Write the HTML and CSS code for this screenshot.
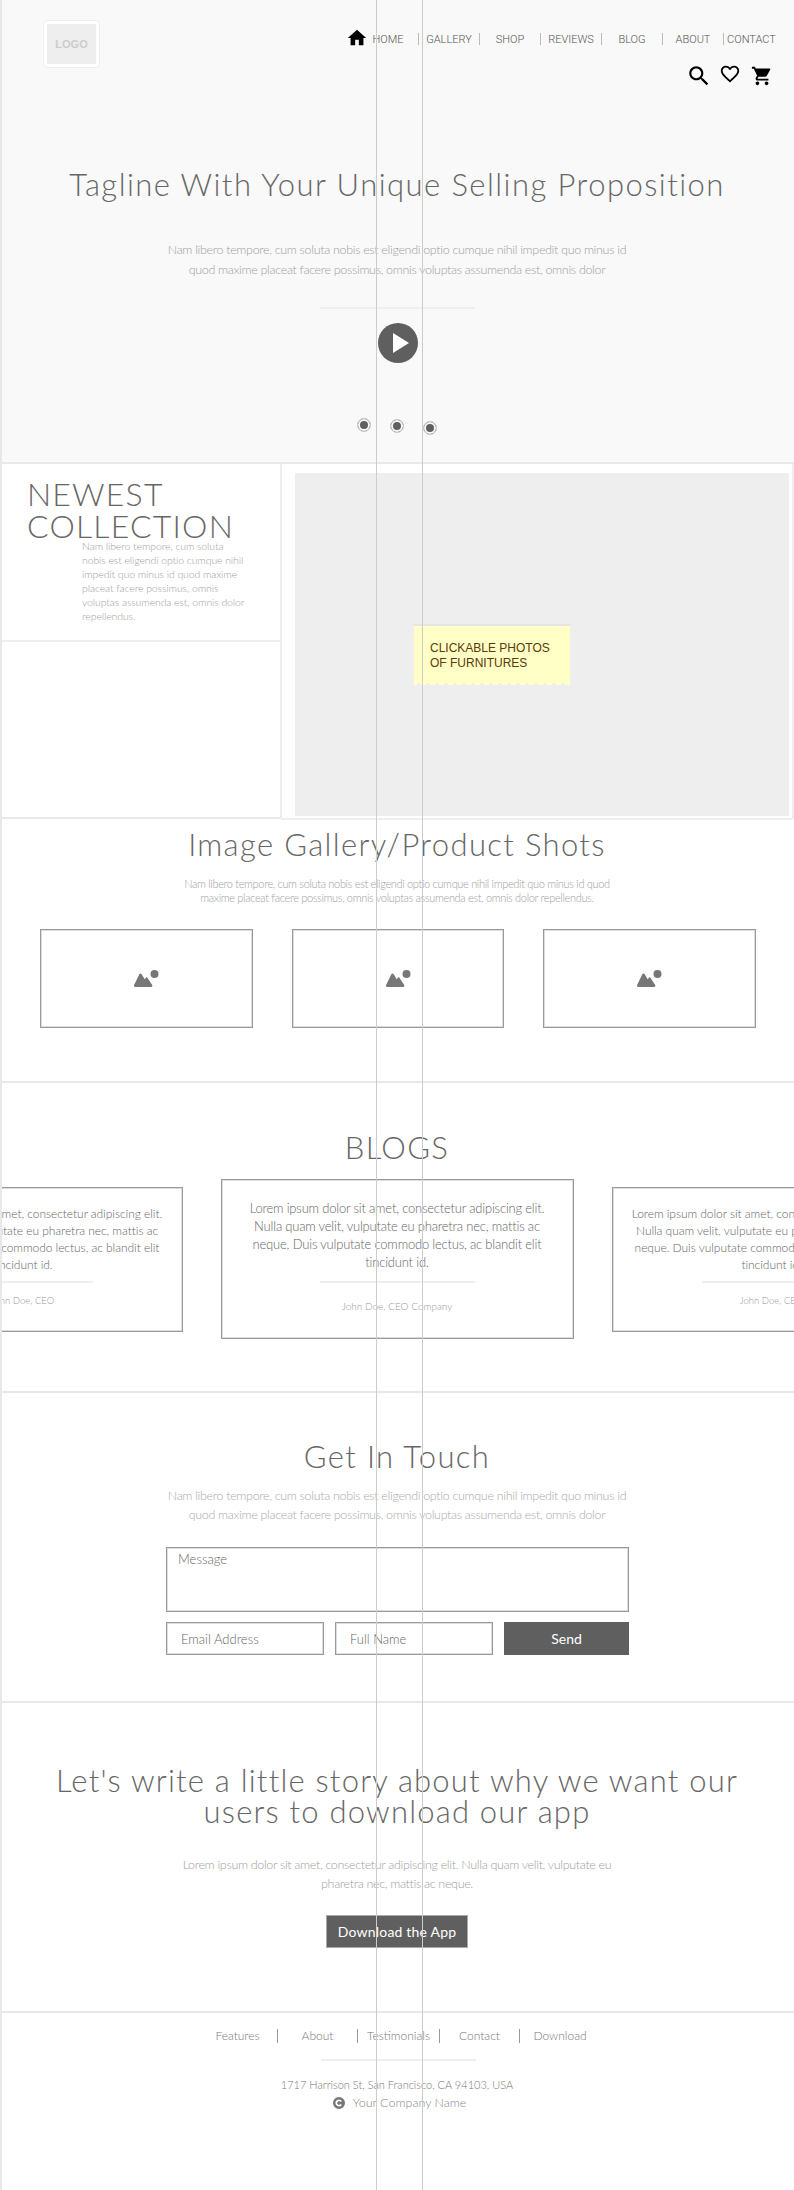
FILE: index.html
```html
<!DOCTYPE html>
<html lang="en">
<head>
    <meta charset="UTF-8">
    <title>Furniture Store Wireframe</title>
    <link rel="stylesheet" href="styles.css">
</head>
<body>
<div class="page">
    <div class="guide guide-edge"></div>
    <div class="guide guide-one"></div>
    <div class="guide guide-two"></div>

    <section class="hero">
        <header class="header">
            <div class="logo">LOGO</div>
            <div class="header-right">
                <nav class="nav">
                    <svg class="home-icon" viewBox="0 0 24 24"><path d="M10 20v-6h4v6h5v-8h3L12 3 2 12h3v8z"/></svg>
                    <a href="#">HOME</a>
                    <a href="#">GALLERY</a>
                    <a href="#">SHOP</a>
                    <a href="#">REVIEWS</a>
                    <a href="#">BLOG</a>
                    <a href="#">ABOUT</a>
                    <a href="#">CONTACT</a>
                </nav>
                <div class="tools">
                    <svg class="tool-search" viewBox="0 0 24 24"><path d="M15.5 14h-.79l-.28-.27C15.41 12.59 16 11.11 16 9.5 16 5.91 13.09 3 9.5 3S3 5.91 3 9.5 5.91 16 9.5 16c1.61 0 3.09-.59 4.23-1.57l.27.28v.79l5 4.99L20.49 19l-4.99-5zm-6 0C7.01 14 5 11.99 5 9.5S7.01 5 9.5 5 14 7.01 14 9.5 11.99 14 9.5 14z"/></svg>
                    <svg class="tool-heart" viewBox="0 0 24 24"><path d="M16.5 3c-1.74 0-3.41.81-4.5 2.09C10.91 3.81 9.24 3 7.5 3 4.42 3 2 5.42 2 8.5c0 3.78 3.4 6.86 8.55 11.54L12 21.35l1.45-1.32C18.6 15.36 22 12.28 22 8.5 22 5.42 19.58 3 16.5 3zm-4.4 15.55l-.1.1-.1-.1C7.14 14.24 4 11.39 4 8.5 4 6.5 5.5 5 7.5 5c1.54 0 3.04.99 3.57 2.36h1.87C13.46 5.99 14.96 5 16.5 5c2 0 3.5 1.5 3.5 3.5 0 2.89-3.14 5.74-7.9 10.05z"/></svg>
                    <svg class="tool-cart" viewBox="0 0 24 24"><path d="M7 18c-1.1 0-1.99.9-1.99 2S5.9 22 7 22s2-.9 2-2-.9-2-2-2zM1 2v2h2l3.6 7.59-1.35 2.45c-.16.28-.25.61-.25.96 0 1.1.9 2 2 2h12v-2H7.42c-.14 0-.25-.11-.25-.25l.03-.12.9-1.83h7.45c.75 0 1.41-.41 1.75-1.03l3.58-6.49c.08-.14.12-.31.12-.48 0-.55-.45-1-1-1H5.21l-.94-2H1zm16 16c-1.1 0-1.99.9-1.99 2s.89 2 1.99 2 2-.9 2-2-.9-2-2-2z"/></svg>
                </div>
            </div>
        </header>
        <h1 class="hero-title">Tagline With Your Unique Selling Proposition</h1>
        <p class="hero-text">Nam libero tempore, cum soluta nobis est eligendi optio cumque nihil impedit quo minus id<br>quod maxime placeat facere possimus, omnis voluptas assumenda est, omnis dolor</p>
        <div class="rule hero-rule"></div>
        <div class="play"><svg viewBox="0 0 40 40"><path d="M15 10l16 10-16 10z"/></svg></div>
        <div class="dots">
            <span class="dot"></span>
            <span class="dot dot-two"></span>
            <span class="dot dot-three"></span>
        </div>
    </section>

    <section class="newest">
        <div class="newest-card">
            <h2 class="newest-title">NEWEST<br>COLLECTION</h2>
            <p class="newest-text">Nam libero tempore, cum soluta<br>nobis est eligendi optio cumque nihil<br>impedit quo minus id quod maxime<br>placeat facere possimus, omnis<br>voluptas assumenda est, omnis dolor<br>repellendus.</p>
        </div>
        <div class="photo-card">
            <div class="photo">
                <div class="note">CLICKABLE PHOTOS<br>OF FURNITURES</div>
            </div>
        </div>
    </section>

    <section class="gallery">
        <h2 class="title">Image Gallery/Product Shots</h2>
        <p class="gallery-text">Nam libero tempore, cum soluta nobis est eligendi optio cumque nihil impedit quo minus id quod<br>maxime placeat facere possimus, omnis voluptas assumenda est, omnis dolor repellendus.</p>
        <div class="shots">
            <div class="shot"><svg viewBox="0 0 26 18"><path d="M7.500 3.500c.5 0 .9.3 1.200.7l3 5 1.200-1.500c.4-.5 1.100-.5 1.500 0l4.800 7.300c.5.9 0 2-1 2H2.200c-1 0-1.600-1.100-1.100-2l5.200-10.800c.2-.4.7-.7 1.200-.7z"/><circle cx="21.500" cy="4" r="4"/></svg></div>
            <div class="shot"><svg viewBox="0 0 26 18"><path d="M7.500 3.500c.5 0 .9.3 1.200.7l3 5 1.200-1.500c.4-.5 1.100-.5 1.500 0l4.800 7.300c.5.9 0 2-1 2H2.200c-1 0-1.600-1.100-1.100-2l5.200-10.800c.2-.4.7-.7 1.200-.7z"/><circle cx="21.500" cy="4" r="4"/></svg></div>
            <div class="shot"><svg viewBox="0 0 26 18"><path d="M7.500 3.500c.5 0 .9.3 1.200.7l3 5 1.200-1.500c.4-.5 1.100-.5 1.500 0l4.800 7.300c.5.9 0 2-1 2H2.200c-1 0-1.600-1.100-1.100-2l5.200-10.800c.2-.4.7-.7 1.200-.7z"/><circle cx="21.500" cy="4" r="4"/></svg></div>
        </div>
    </section>

    <section class="blogs">
        <h2 class="title">BLOGS</h2>
        <div class="blog-row">
            <div class="blog blog-side">
                <p>Lorem ipsum dolor sit amet, consectetur adipiscing elit.<br>Nulla quam velit, vulputate eu pharetra nec, mattis ac<br>neque. Duis vulputate commodo lectus, ac blandit elit<br>tincidunt id.</p>
                <div class="rule"></div>
                <span>John Doe, CEO</span>
            </div>
            <div class="blog blog-main">
                <p>Lorem ipsum dolor sit amet, consectetur adipiscing elit.<br>Nulla quam velit, vulputate eu pharetra nec, mattis ac<br>neque. Duis vulputate commodo lectus, ac blandit elit<br>tincidunt id.</p>
                <div class="rule"></div>
                <span>John Doe, CEO Company</span>
            </div>
            <div class="blog blog-side">
                <p>Lorem ipsum dolor sit amet, consectetur adipiscing elit.<br>Nulla quam velit, vulputate eu pharetra nec, mattis ac<br>neque. Duis vulputate commodo lectus, ac blandit elit<br>tincidunt id.</p>
                <div class="rule"></div>
                <span>John Doe, CEO</span>
            </div>
        </div>
    </section>

    <section class="contact">
        <h2 class="title">Get In Touch</h2>
        <p class="lead">Nam libero tempore, cum soluta nobis est eligendi optio cumque nihil impedit quo minus id<br>quod maxime placeat facere possimus, omnis voluptas assumenda est, omnis dolor</p>
        <form class="contact-form">
            <textarea placeholder="Message"></textarea>
            <div class="form-row">
                <input type="text" placeholder="Email Address">
                <input type="text" placeholder="Full Name">
                <button type="button" class="btn btn-send">Send</button>
            </div>
        </form>
    </section>

    <section class="app">
        <h2 class="title app-title">Let's write a little story about why we want our<br>users to download our app</h2>
        <p class="lead app-text">Lorem ipsum dolor sit amet, consectetur adipiscing elit. Nulla quam velit, vulputate eu<br>pharetra nec, mattis ac neque.</p>
        <button type="button" class="btn btn-app">Download the App</button>
    </section>

    <footer class="footer">
        <nav class="footer-nav">
            <a href="#">Features</a>
            <a href="#">About</a>
            <a href="#">Testimonials</a>
            <a href="#">Contact</a>
            <a href="#">Download</a>
        </nav>
        <div class="rule footer-rule"></div>
        <p class="address">1717 Harrison St, San Francisco, CA 94103, USA</p>
        <p class="company">
            <svg viewBox="0 0 24 24"><path d="M12 0a12 12 0 1 0 0 24 12 12 0 0 0 0-24zm0 19a7 7 0 1 1 5.800-10.900l-3 1.800A3.500 3.500 0 1 0 14.800 14l3 1.900A7 7 0 0 1 12 19z"/></svg>
            Your Company Name
        </p>
    </footer>
</div>
</body>
</html>
```

FILE: styles.css
```css
* {
    box-sizing: border-box;
}
body {
    margin: 0;
    font-family: Lato, sans-serif;
    font-weight: 300;
    color: #666;
    background-color: #fff;
}
p, h1, h2 {
    margin: 0;
    font-weight: 300;
}
a {
    color: inherit;
    text-decoration: none;
}
.page {
    position: relative;
    width: 794px;
    height: 2190px;
    overflow: hidden;
}
.guide {
    position: absolute;
    top: 0;
    bottom: 0;
    width: 1px;
    background-color: #ccc;
    z-index: 5;
}
.guide-edge {
    left: 0;
    width: 2px;
    background-color: #e8e8e8;
}
.guide-one {
    left: 376px;
}
.guide-two {
    left: 422px;
}
.rule {
    width: 155px;
    height: 2px;
    margin: 0 auto;
    background-color: #eee;
}
.title {
    font-size: 31px;
    letter-spacing: 1.35px;
    line-height: 40px;
    text-align: center;
    color: #666;
}
.lead {
    font-size: 12.5px;
    letter-spacing: -0.33px;
    line-height: 19px;
    text-align: center;
    color: #a0a0a0;
}

/* hero */
.hero {
    height: 462px;
    background-color: #f9f9f9;
    text-align: center;
}
.header {
    display: flex;
    justify-content: space-between;
    height: 89px;
    padding: 21px 15px 0 44px;
}
.logo {
    width: 55px;
    height: 46px;
    border: 3px solid #fff;
    outline: 1px solid #eee;
    border-radius: 3px;
    background-color: #eee;
    color: #ccc;
    font-family: "Liberation Sans", sans-serif;
    font-size: 11px;
    font-weight: 700;
    line-height: 40px;
    text-align: center;
}
.header-right {
    margin-top: 6px;
}
.nav {
    display: flex;
    height: 22px;
    font-family: Roboto, sans-serif;
    font-size: 11px;
    font-weight: 300;
    color: #555;
}
.home-icon {
    width: 22px;
    height: 22px;
    margin-right: -10px;
    fill: #000;
}
.nav a {
    width: 61px;
    height: 12px;
    margin-top: 6px;
    border-right: 1px solid #bbb;
    line-height: 14px;
    text-align: center;
}
.nav a:last-child {
    width: 55px;
    border-right: none;
}
.tools {
    display: flex;
    justify-content: flex-end;
    align-items: flex-start;
    margin-top: 14px;
    margin-right: 6px;
}
.tools svg {
    fill: #000;
}
.tool-search {
    width: 26px;
    height: 26px;
}
.tool-heart {
    width: 22px;
    height: 22px;
    margin-left: 7px;
}
.tool-cart {
    width: 22px;
    height: 22px;
    margin-left: 10px;
    margin-top: 2px;
}
.hero-title {
    margin-top: 75px;
    font-size: 31px;
    letter-spacing: 1.45px;
    line-height: 40px;
    color: #666;
}
.hero-text {
    margin-top: 36px;
    font-size: 12.5px;
    letter-spacing: -0.33px;
    line-height: 20px;
    color: #a0a0a0;
}
.hero-rule {
    margin-top: 27px;
}
.play {
    width: 40px;
    height: 40px;
    margin: 14px 0 0 378px;
    border-radius: 50%;
    background-color: #5f5f5f;
}
.play svg {
    display: block;
    fill: #fff;
}
.dots {
    display: flex;
    justify-content: center;
    gap: 19px;
    margin-top: 55px;
}
.dot {
    width: 14px;
    height: 14px;
    border: 1px solid #ccc;
    border-radius: 50%;
    background-color: #5f5f5f;
    box-shadow: inset 0 0 0 2px #f9f9f9;
}
.dot-two {
    margin-top: 1px;
}
.dot-three {
    margin-top: 3px;
}

/* newest collection */
.newest {
    display: flex;
    align-items: flex-start;
    height: 357px;
    border-top: 2px solid #e8e8e8;
    border-bottom: 2px solid #e8e8e8;
}
.newest-card {
    width: 282px;
    height: 178px;
    padding: 14px 0 0 27px;
    border-right: 2px solid #eee;
    border-bottom: 2px solid #eee;
}
.newest-title {
    font-size: 32px;
    letter-spacing: 1.2px;
    line-height: 32px;
    color: #666;
}
.newest-text {
    margin: -3px 0 0 55px;
    font-size: 10.5px;
    letter-spacing: -0.1px;
    line-height: 14px;
    color: #a0a0a0;
    white-space: nowrap;
}
.photo-card {
    width: 514px;
    height: 356px;
    margin-left: -2px;
    padding: 9px 3px 2px 13px;
    border: 2px solid #eee;
    border-top: none;
    border-radius: 0 0 3px 3px;
    background-color: #fff;
    position: relative;
}
.photo {
    position: relative;
    height: 100%;
    background-color: #eee;
}
.note {
    position: absolute;
    left: 119px;
    top: 151px;
    width: 156px;
    height: 61px;
    padding: 15px 16px 0;
    border-top: 2px solid #e5e5e5;
    color: #5a3a08;
    font-family: "Liberation Sans", sans-serif;
    font-size: 12px;
    font-weight: 400;
    line-height: 15px;
    background:
        linear-gradient(135deg, #ffffc6 50%, transparent 50%) 0 100% / 9px 5px repeat-x,
        linear-gradient(225deg, #ffffc6 50%, transparent 50%) 0 100% / 9px 5px repeat-x,
        linear-gradient(#ffffc6, #ffffc6) 0 0 / 100% calc(100% - 5px) no-repeat;
}

/* gallery */
.gallery {
    height: 264px;
    padding-top: 5px;
    border-bottom: 2px solid #e8e8e8;
}
.gallery-text {
    margin-top: 13px;
    font-size: 11px;
    letter-spacing: -0.33px;
    line-height: 14px;
    text-align: center;
    color: #a0a0a0;
}
.shots {
    display: flex;
    gap: 39px;
    margin-top: 24px;
    padding-left: 40px;
}
.shot {
    display: flex;
    justify-content: center;
    align-items: center;
    width: 212.5px;
    height: 99px;
    border: 1px solid #999;
    box-shadow: inset 0 0 0 1px #ddd;
}
.shot svg {
    width: 26px;
    height: 18px;
    fill: #777;
}

/* blogs */
.blogs {
    height: 310px;
    padding-top: 44px;
    border-bottom: 2px solid #e8e8e8;
}
.blog-row {
    display: flex;
    justify-content: center;
    align-items: center;
    gap: 38px;
    margin: 12px -138px 0;
}
.blog {
    flex-shrink: 0;
    border: 1px solid #999;
    box-shadow: inset 0 0 0 1px #ddd;
    text-align: center;
}
.blog span {
    display: block;
    color: #999;
    line-height: 14px;
}
.blog p {
    color: #666;
}
.blog-main {
    width: 353px;
    height: 160px;
    padding-top: 19px;
}
.blog-main p {
    font-size: 13px;
    letter-spacing: -0.2px;
    line-height: 18px;
}
.blog-main .rule {
    margin-top: 10px;
}
.blog-main span {
    margin-top: 16px;
    font-size: 10px;
}
.blog-side {
    width: 320px;
    height: 145px;
    padding-top: 17px;
}
.blog-side p {
    font-size: 12px;
    letter-spacing: -0.05px;
    line-height: 17px;
}
.blog-side .rule {
    width: 140px;
    margin-top: 8px;
}
.blog-side span {
    margin-top: 11px;
    font-size: 9.5px;
}

/* contact */
.contact {
    height: 310px;
    padding-top: 43px;
    border-bottom: 2px solid #e8e8e8;
}
.contact .lead {
    margin-top: 10px;
    color: #aaa;
}
.contact-form {
    display: flex;
    flex-direction: column;
    gap: 10px;
    width: 463px;
    margin: 23px 0 0 166px;
}
.contact-form textarea,
.contact-form input {
    border: 1px solid #999;
    box-shadow: inset 0 0 0 1px #ddd;
    border-radius: 0;
    font-family: Lato, sans-serif;
    font-size: 13px;
    font-weight: 300;
    outline: none;
}
.contact-form textarea {
    height: 65px;
    padding: 3px 11px;
    resize: none;
}
.contact-form ::placeholder {
    color: #666;
}
.form-row {
    display: flex;
    gap: 11px;
}
.form-row input {
    width: 158px;
    height: 33px;
    padding: 0 14px;
}
.btn {
    height: 33px;
    border: 1px solid #aaa;
    background-color: #5f5f5f;
    color: #fff;
    font-family: Lato, sans-serif;
    font-size: 14px;
    font-weight: 400;
}
.btn-send {
    width: 125px;
    border: none;
}

/* app */
.app {
    height: 310px;
    padding-top: 62px;
    text-align: center;
    border-bottom: 2px solid #e8e8e8;
}
.app-title {
    letter-spacing: 1.2px;
    line-height: 31px;
}
.app-text {
    margin-top: 28px;
}
.btn-app {
    display: block;
    width: 142px;
    margin: 22px auto 0;
    letter-spacing: 0.2px;
}

/* footer */
.footer {
    padding-top: 16px;
    text-align: center;
}
.footer-nav {
    display: flex;
    padding-left: 198px;
    font-size: 12px;
    line-height: 14px;
    color: #777;
}
.footer-nav a {
    width: 80px;
    height: 14px;
    border-right: 1px solid #999;
}
.footer-nav a:nth-child(3) {
    width: 82px;
}
.footer-nav a:last-child {
    border-right: none;
}
.footer-rule {
    margin-top: 16px;
    margin-left: 321px;
}
.address {
    margin-top: 16px;
    font-size: 11px;
    line-height: 16px;
    color: #777;
}
.company {
    display: flex;
    justify-content: center;
    align-items: center;
    gap: 8px;
    margin-top: 1px;
    padding-left: 5px;
    font-size: 12.5px;
    line-height: 18px;
    color: #888;
}
.company svg {
    width: 12px;
    height: 12px;
    fill: #777;
}
```
